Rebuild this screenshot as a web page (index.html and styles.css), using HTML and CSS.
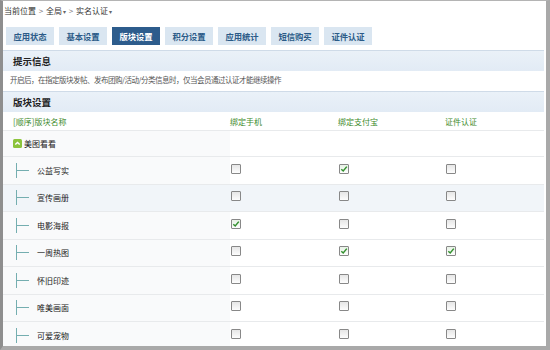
FILE: index.html
```html
<!DOCTYPE html>
<html lang="zh-CN">
<head>
  <meta charset="UTF-8" />
  <title>实名认证 - 版块设置</title>
  <link rel="stylesheet" href="styles.css">
</head>
<body>
  <div class="frame">
    <div class="crumbs">当前位置 <span class="sep">&gt;</span> 全局<span class="caret">▾</span> <span class="sep">&gt;</span> 实名认证<span class="caret">▾</span></div>

    <ul class="tabs">
      <li>应用状态</li>
      <li>基本设置</li>
      <li class="active">版块设置</li>
      <li>积分设置</li>
      <li>应用统计</li>
      <li>短信购买</li>
      <li>证件认证</li>
    </ul>

    <div class="panel">
      <div class="band">提示信息</div>
      <div class="tip">开启后，在指定版块发帖、发布团购/活动/分类信息时，仅当会员通过认证才能继续操作</div>

      <div class="band">版块设置</div>
      <div class="row head">
        <div class="name">[顺序]版块名称</div>
        <div>绑定手机</div>
        <div>绑定支付宝</div>
        <div>证件认证</div>
      </div>

      <div class="row group">
        <div class="name">
          <svg class="fold" width="9" height="9" viewBox="0 0 9 9"><rect width="9" height="9" rx="1.5" fill="#8cc43c"/><polyline points="2.3,5.6 4.5,3.4 6.7,5.6" fill="none" stroke="#fff" stroke-width="1.4"/></svg>美图看看
        </div>
        <div></div><div></div><div></div>
      </div>

      <div class="row child">
        <div class="name"><span class="branch"></span>公益写实</div>
        <div><span class="box"></span></div>
        <div><span class="box on"></span></div>
        <div><span class="box"></span></div>
      </div>
      <div class="row child alt">
        <div class="name"><span class="branch"></span>宣传画册</div>
        <div><span class="box"></span></div>
        <div><span class="box"></span></div>
        <div><span class="box"></span></div>
      </div>
      <div class="row child">
        <div class="name"><span class="branch"></span>电影海报</div>
        <div><span class="box on"></span></div>
        <div><span class="box"></span></div>
        <div><span class="box"></span></div>
      </div>
      <div class="row child">
        <div class="name"><span class="branch"></span>一周热图</div>
        <div><span class="box"></span></div>
        <div><span class="box on"></span></div>
        <div><span class="box on"></span></div>
      </div>
      <div class="row child">
        <div class="name"><span class="branch"></span>怀旧印迹</div>
        <div><span class="box"></span></div>
        <div><span class="box"></span></div>
        <div><span class="box"></span></div>
      </div>
      <div class="row child">
        <div class="name"><span class="branch"></span>唯美画面</div>
        <div><span class="box"></span></div>
        <div><span class="box"></span></div>
        <div><span class="box"></span></div>
      </div>
      <div class="row child">
        <div class="name"><span class="branch"></span>可爱宠物</div>
        <div><span class="box"></span></div>
        <div><span class="box"></span></div>
        <div><span class="box"></span></div>
      </div>
    </div>
  </div>
</body>
</html>
```

FILE: styles.css
```css
html, body {
  margin: 0;
  padding: 0;
  background: #ffffff;
}

body {
  font-family: "Noto Sans CJK SC", "Noto Sans", sans-serif;
  font-size: 8px;
  color: #333;
}

.frame {
  width: 550px;
  height: 350px;
  box-sizing: border-box;
  border-top: 1px solid #b4b4b4;
  border-left: 3px solid #8e8e8e;
  border-right: 4px solid #a9a9a9;
  border-bottom: 4px solid #a9a9a9;
  overflow: hidden;
}

.crumbs {
  height: 20px;
  line-height: 19px;
  padding-left: 1px;
  color: #333;
}

.crumbs .sep {
  color: #777;
  margin: 0 1px;
}

.crumbs .caret {
  font-size: 6px;
  color: #666;
  margin-left: 1px;
}

.tabs {
  list-style: none;
  margin: 6px 0 0 3px;
  padding: 0;
  display: flex;
  gap: 5px;
}

.tabs li {
  width: 48px;
  height: 18px;
  line-height: 18px;
  text-align: center;
  background: #dae6f1;
  color: #2b5b88;
  font-size: 8.3px;
  font-weight: bold;
}

.tabs li.active {
  background: #2d5c8c;
  color: #ffffff;
}

.panel {
  margin: 5px 2px 0 0;
}

.band {
  height: 20px;
  line-height: 20px;
  padding-left: 10px;
  background: linear-gradient(#eaf1f8, #e2ebf5);
  border-top: 1px solid #cfdbe8;
  font-size: 9.5px;
  font-weight: bold;
  color: #222;
}

.tip {
  height: 20px;
  line-height: 18px;
  padding-left: 7px;
  font-size: 7.5px;
  letter-spacing: -0.5px;
  color: #555;
}

.row {
  display: grid;
  grid-template-columns: 227px 108px 107px 1fr;
  align-items: center;
  border-bottom: 1px solid #e8eaec;
}

.row .name {
  padding-left: 10px;
  align-self: stretch;
  display: flex;
  align-items: center;
  background: #f9fafb;
}

.row.head {
  height: 18px;
  color: #3d8a2c;
}

.row.head .name {
  background: none;
}

.row.group {
  height: 25px;
  color: #222;
}

.fold {
  margin: 0 2px 0 0;
}

.row.child {
  height: 26.5px;
  color: #222;
}

.row.child .name {
  padding-left: 13px;
}

.row.alt,
.row.alt .name {
  background: #f1f5f9;
}

.branch {
  position: relative;
  width: 17px;
  height: 15px;
  margin-right: 3px;
  border-left: 1px solid #74aeb0;
}

.branch::after {
  content: "";
  position: absolute;
  left: 0;
  top: 7px;
  width: 12px;
  border-top: 1px solid #74aeb0;
}

.box {
  display: block;
  width: 8px;
  height: 8px;
  margin: -3px 0 0 1px;
  border: 1px solid #888;
  border-radius: 1px;
  background: linear-gradient(#e6e6e6, #fdfdfd);
}

.box.on {
  background:
    url("data:image/svg+xml,%3Csvg xmlns='http://www.w3.org/2000/svg' width='8' height='8'%3E%3Cpolyline points='1.3,4.2 3.2,6 6.8,1.6' fill='none' stroke='%2333912f' stroke-width='1.5'/%3E%3C/svg%3E") no-repeat center,
    linear-gradient(#e8f2e6, #fdfdfd);
}
```
